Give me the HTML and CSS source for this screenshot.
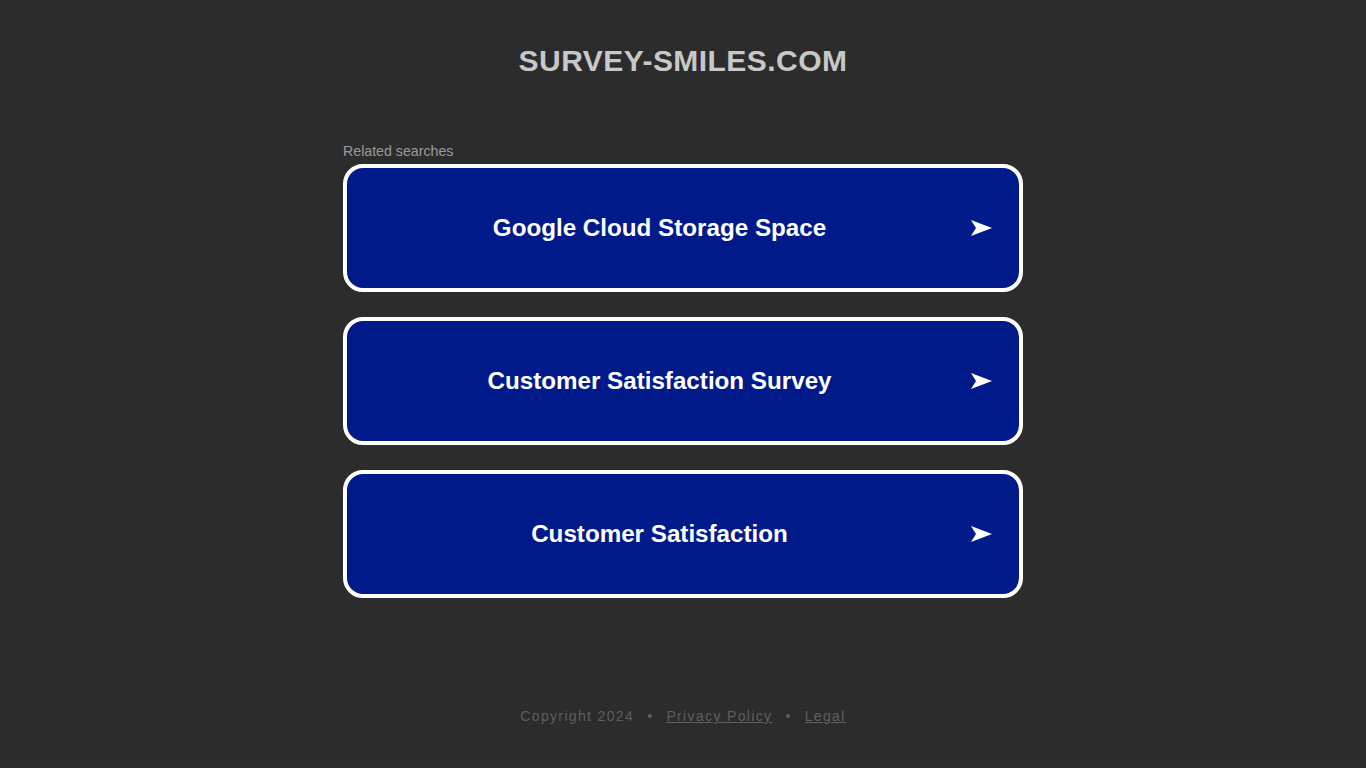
FILE: index.html
```html
<!DOCTYPE html>
<html>
<head>
<meta charset="utf-8">
<link rel="stylesheet" href="styles.css">
</head>
<body>
<div class="page">
  <header class="header">
    <h1 class="domain">SURVEY-SMILES.COM</h1>
  </header>
  <main class="main">
    <div class="related">Related searches</div>
    <div class="links">
      <a class="link" href="#"><span class="link-text">Google Cloud Storage Space</span><svg class="arrow" viewBox="0 0 21 17" width="21" height="17"><polygon points="0,0.5 21,8.5 0,16.5 5,8.5" fill="#fff"/></svg></a>
      <a class="link" href="#"><span class="link-text">Customer Satisfaction Survey</span><svg class="arrow" viewBox="0 0 21 17" width="21" height="17"><polygon points="0,0.5 21,8.5 0,16.5 5,8.5" fill="#fff"/></svg></a>
      <a class="link" href="#"><span class="link-text">Customer Satisfaction</span><svg class="arrow" viewBox="0 0 21 17" width="21" height="17"><polygon points="0,0.5 21,8.5 0,16.5 5,8.5" fill="#fff"/></svg></a>
    </div>
  </main>
  <footer class="footer">
    <span>Copyright 2024</span>
    <span class="dot">•</span>
    <a href="#" class="flink">Privacy Policy</a>
    <span class="dot">•</span>
    <a href="#" class="flink">Legal</a>
  </footer>
</div>
</body>
</html>
```
FILE: styles.css
```css
html, body {
  margin: 0;
  padding: 0;
  background: #2c2c2c;
  font-family: "Liberation Sans", Arial, sans-serif;
}
.page {
  width: 1366px;
  height: 768px;
  display: flex;
  flex-direction: column;
  align-items: center;
}
.header {
  padding-top: 43px;
}
.domain {
  margin: 0;
  font-size: 30px;
  line-height: 36px;
  font-weight: bold;
  color: #c8c8c8;
  letter-spacing: 0.45px;
}
.main {
  width: 680px;
  margin-top: 64px;
}
.related {
  font-size: 14.2px;
  line-height: 16px;
  color: #9a9a9a;
  margin-bottom: 5px;
}
.links {
  display: flex;
  flex-direction: column;
  gap: 25px;
}
.link {
  box-sizing: border-box;
  height: 128px;
  border: 4px solid #ffffff;
  border-radius: 20px;
  background: #011a8a;
  color: #ffffff;
  text-decoration: none;
  display: flex;
  align-items: center;
  position: relative;
}
.link-text {
  flex: 1;
  text-align: center;
  font-size: 24.2px;
  font-weight: bold;
  margin-right: 47px;
}
.arrow {
  position: absolute;
  right: 27px;
  top: 50%;
  transform: translateY(-50%);
}
.footer {
  margin-top: auto;
  margin-bottom: 44px;
  font-size: 14px;
  letter-spacing: 1.35px;
  color: #5f5f5f;
  display: flex;
  gap: 13px;
}
.dot {
  color: #5f5f5f;
}
.flink {
  color: #5f5f5f;
  text-decoration: underline;
}
```
